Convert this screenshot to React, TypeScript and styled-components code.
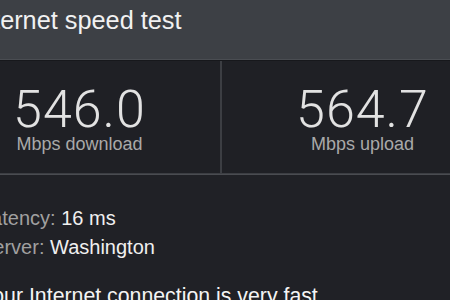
import React from "react";
import styled, { createGlobalStyle } from "styled-components";

const Global = createGlobalStyle`
  html, body { margin: 0; padding: 0; background: #202126; overflow: hidden; }
  body { font-family: "Liberation Sans", Arial, sans-serif; }
`;

const Page = styled.div`
  width: 566px;
  margin-left: -62px;
`;

const Header = styled.header`
  height: 60px;
  box-sizing: border-box;
  background: #3d4045;
  border-bottom: 1px solid #4a4d52;
  padding: 5px 0 0 34px;
`;

const Title = styled.h1`
  margin: 0;
  font-size: 25.3px;
  font-weight: 400;
  line-height: 30px;
  color: #f1f1f1;
`;

const Stats = styled.section`
  display: grid;
  grid-template-columns: 1fr 1fr;
  border-top: 1px solid #17181c;
  border-bottom: 1px solid #4a4c51;
  background: #1f2025;
`;

const Cell = styled.div`
  display: flex;
  flex-direction: column;
  align-items: center;
  padding: 23px 0 20px;
  border: 1px solid #3c3e43;
  border-top: none;
`;

const Value = styled.div`
  font-family: "Roboto", "Liberation Sans", sans-serif;
  font-weight: 300;
  font-size: 52px;
  letter-spacing: 1px;
  line-height: 51px;
  color: #e2e2e2;
`;

const Unit = styled.div`
  font-size: 18px;
  line-height: 18px;
  color: #a9a9a9;
`;

const Details = styled.section`
  padding: 29px 0 0 42px;
`;

const Line = styled.div`
  font-size: 20px;
  line-height: 29px;
  color: #f0f0f0;
`;

const Label = styled.span`
  color: #a0a0a0;
`;

const Verdict = styled.p`
  margin: 20px 0 0;
  font-size: 21.3px;
  line-height: 29px;
  color: #f4f4f4;
`;

export default function App() {
  return (
    <>
      <Global />
      <Page>
        <Header>
          <Title>Internet speed test</Title>
        </Header>
        <Stats>
          <Cell>
            <Value>546.0</Value>
            <Unit>Mbps download</Unit>
          </Cell>
          <Cell>
            <Value>564.7</Value>
            <Unit>Mbps upload</Unit>
          </Cell>
        </Stats>
        <Details>
          <Line>
            <Label>Latency:</Label> 16 ms
          </Line>
          <Line>
            <Label>Server:</Label> Washington
          </Line>
          <Verdict>Your Internet connection is very fast</Verdict>
        </Details>
      </Page>
    </>
  );
}
